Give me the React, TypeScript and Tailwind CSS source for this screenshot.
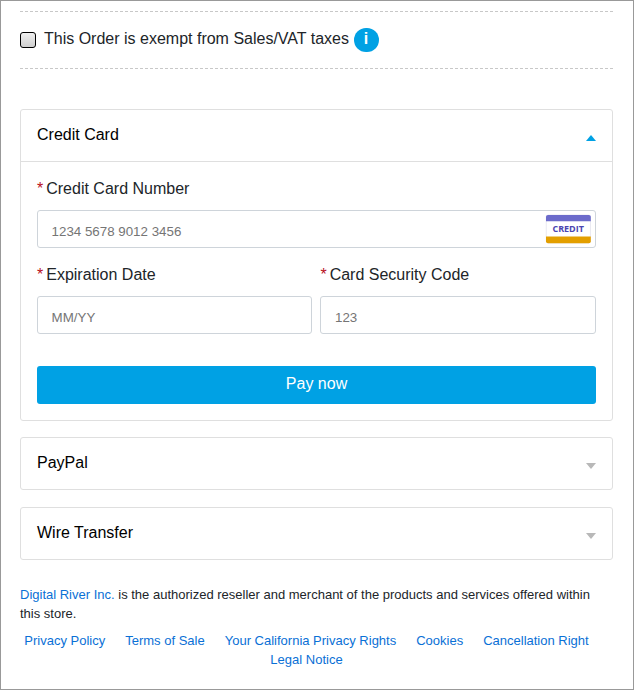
import React from "react";

function Triangle({ up }: { up?: boolean }) {
  return (
    <svg width="10" height="6" viewBox="0 0 10 6" className="mt-1.5 shrink-0">
      {up ? <path d="M0 6L5 0L10 6Z" fill="#00a1e4" /> : <path d="M0 0L5 6L10 0Z" fill="#b8b8b8" />}
    </svg>
  );
}

function PanelHeader({ title, open }: { title: string; open?: boolean }) {
  return (
    <div className="flex h-[51px] items-center justify-between px-4 pb-0.5 text-base text-black">
      <span className="leading-6">{title}</span>
      <Triangle up={open} />
    </div>
  );
}

function Field({ label, placeholder, children }: { label: string; placeholder: string; children?: React.ReactNode }) {
  return (
    <label className="block min-w-0">
      <span className="flex h-6 gap-[3px] text-base leading-6 text-[#212529]">
        <span className="text-[#b80f1e]">*</span>
        {label}
      </span>
      <span className="mt-[9px] flex h-[38px] items-center rounded-[3px] border border-[#ced4da] bg-white pr-1 pl-[13.6px]">
        <input
          className="mt-1 h-5 min-w-0 flex-1 bg-transparent text-[13.3333px] outline-none placeholder:text-[#757575]"
          placeholder={placeholder}
        />
        {children}
      </span>
    </label>
  );
}

function CreditBadge() {
  return (
    <svg width="46" height="30" viewBox="0 0 46 30" className="shrink-0">
      <rect x="1.25" y="1" width="44.2" height="28" rx="2" fill="#fff" stroke="#e3e3ee" strokeWidth="0.8" />
      <path d="M1 7.2V2.8Q1 1 3 1H43.8Q45.8 1 45.8 2.8V7.2Z" fill="#6c6bcb" />
      <path d="M1 22.5V27.3Q1 29.3 3 29.3H43.8Q45.8 29.3 45.8 27.3V22.5Z" fill="#e39f00" />
      <text
        x="23.2"
        y="18.1"
        textAnchor="middle"
        textLength="31.5"
        lengthAdjust="spacingAndGlyphs"
        fontSize="9.2"
        fontWeight="700"
        fill="#4b44b0"
        fontFamily="'Open Sans', sans-serif"
      >
        CREDIT
      </text>
    </svg>
  );
}

const links = [
  "Privacy Policy",
  "Terms of Sale",
  "Your California Privacy Rights",
  "Cookies",
  "Cancellation Right",
  "Legal Notice",
];

export default function App() {
  return (
    <div className="h-[690px] w-[634px] overflow-hidden border border-[#999] bg-white pt-2.5 pr-5 pl-[19px] font-['Liberation_Sans',Arial,sans-serif] text-[#212529]">
      <div className="flex h-[58px] items-center border-y border-dashed border-[#c8c8c8]">
        <span className="h-4 w-4 rounded-[3px] border border-black bg-linear-to-b from-[#f0f0f0] to-[#cfcfcf]" />
        <span className="mb-0.5 ml-2 text-base leading-6">This Order is exempt from Sales/VAT taxes</span>
        <span className="ml-[5px] flex h-6 w-[25px] justify-center rounded-full bg-[#00a1e4] pr-px text-base leading-[22px] font-bold text-white">
          i
        </span>
      </div>

      <section className="mt-10 h-[312px] rounded-[3px] border border-[#dfdfdf]">
        <PanelHeader title="Credit Card" open />
        <div className="border-t border-[#dfdfdf] px-4 pt-[15px]">
          <Field label="Credit Card Number" placeholder="1234 5678 9012 3456">
            <CreditBadge />
          </Field>
          <div className="mt-[15px] grid grid-cols-[275.4px_275.6px] gap-2">
            <Field label="Expiration Date" placeholder="MM/YY" />
            <Field label="Card Security Code" placeholder="123" />
          </div>
          <button className="mt-8 block h-[38px] w-full rounded-[3px] bg-[#00a1e4] pb-0.5 text-base leading-6 text-white">
            Pay now
          </button>
        </div>
      </section>

      <section className="mt-4 rounded-[3px] border border-[#dfdfdf]">
        <PanelHeader title="PayPal" />
      </section>
      <section className="mt-[17px] rounded-[3px] border border-[#dfdfdf]">
        <PanelHeader title="Wire Transfer" />
      </section>

      <footer className="mt-[25px] text-[13px] leading-[19px]">
        <p>
          <a className="text-[#0a70d6]">Digital River Inc.</a> is the authorized reseller and merchant of the products
          and services offered within this store.
        </p>
        <nav className="mt-2 flex flex-wrap justify-center gap-x-5 pr-5 text-[#0a70d6]">
          {links.map((link) => (
            <a key={link}>{link}</a>
          ))}
        </nav>
      </footer>
    </div>
  );
}
